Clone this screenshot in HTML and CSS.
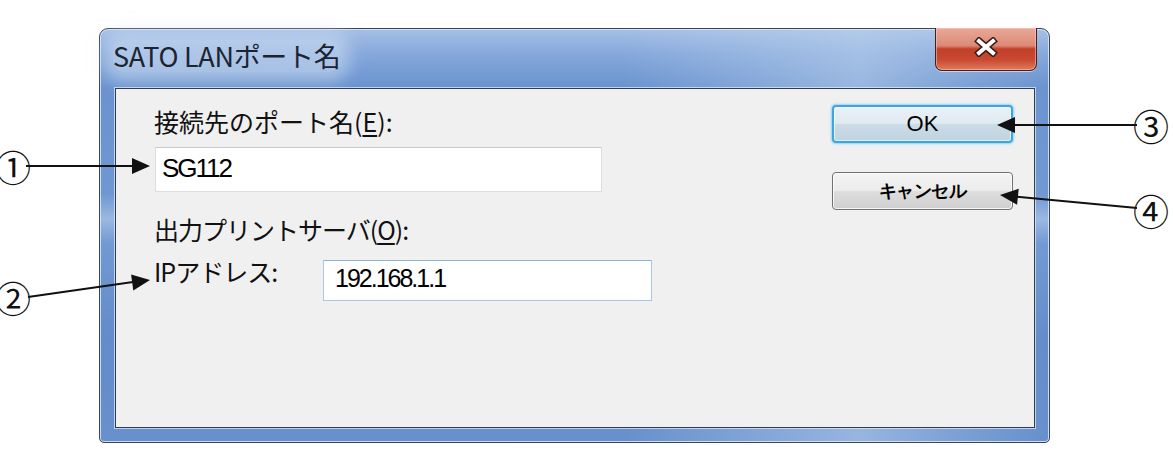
FILE: index.html
```html
<!DOCTYPE html>
<html lang="ja">
<head>
    <meta charset="UTF-8">
    <title>SATO LANポート名</title>
    <link rel="stylesheet" href="styles.css">
</head>
<body>
    <div class="page">
        <!-- Dialog window -->
        <div class="window">
            <div class="titlebar">
                <span class="title">SATO LANポート名</span>
                <button class="close" type="button">
                    <svg width="26" height="20" viewBox="0 0 26 20">
                        <path d="M6 4 L20 16 M20 4 L6 16" stroke="#3a1d18" stroke-width="7" stroke-linecap="square"/>
                        <path d="M6 4 L20 16 M20 4 L6 16" stroke="#ffffff" stroke-width="4" stroke-linecap="square"/>
                    </svg>
                </button>
            </div>
            <div class="client">
                <div class="fields">
                    <label class="label">接続先のポート名(<u>E</u>):</label>
                    <div class="textbox port-box">SG112</div>
                    <div class="label group">出力プリントサーバ(<u>O</u>):</div>
                    <div class="ip-row">
                        <label class="label ip-label">IPアドレス:</label>
                        <div class="textbox ip-box">192.168.1.1</div>
                    </div>
                </div>
                <div class="buttons">
                    <button class="btn btn-default" type="button">OK</button>
                    <button class="btn btn-cancel" type="button">キャンセル</button>
                </div>
            </div>
        </div>

        <!-- Numbered callouts drawn over the dialog -->
        <svg class="callouts" width="1173" height="456" viewBox="0 0 1173 456">
            <g stroke="#111" stroke-width="2">
                <line x1="26" y1="166" x2="134" y2="166"/>
                <line x1="28" y1="297" x2="133" y2="282"/>
                <line x1="1137" y1="125" x2="1013" y2="125"/>
                <line x1="1137" y1="208" x2="1017" y2="196.7"/>
            </g>
            <g fill="#111">
                <polygon points="150,166 132,158 132,174"/>
                <polygon points="150,280 133.3,290.4 131.1,274.5"/>
                <polygon points="997,125 1015,117 1015,133"/>
                <polygon points="1000,195 1018.7,188.7 1017.1,204.7"/>
            </g>
            <g class="num">
                <text x="13" y="166">①</text>
                <text x="13" y="297">②</text>
                <text x="1151" y="125">③</text>
                <text x="1151" y="210">④</text>
            </g>
        </svg>
    </div>
</body>
</html>
```

FILE: styles.css
```css
body {
    margin: 0;
    background: #fff;
    font-family: "Noto Sans CJK JP", "Noto Sans", sans-serif;
}
.page {
    position: relative;
    width: 1173px;
    height: 456px;
    padding: 28px 0 0 99px;
    box-sizing: border-box;
    overflow: hidden;
}

/* Aero style frame */
.window {
    width: 951px;
    height: 415px;
    box-sizing: border-box;
    padding: 0 14px 14px 15px;
    display: flex;
    flex-direction: column;
    border: 1px solid #3a4656;
    border-radius: 9px 9px 5px 5px;
    background:
        linear-gradient(90deg, rgba(255,255,255,0) 0, rgba(255,255,255,0) 55%, rgba(190,212,238,0.55) 80%, rgba(190,212,238,0.2) 92%, rgba(255,255,255,0) 100%),
        linear-gradient(180deg, #a6c0e6 0, #86a8db 6%, #6a93cf 14%, #6f98d2 40%, #9bb8e2 46%, #7199d2 52%, #628cca 75%, #6790cc 100%);
    box-shadow: inset 0 0 0 1px rgba(226, 236, 250, 0.8);
}
.titlebar {
    height: 59px;
    display: flex;
    justify-content: space-between;
    align-items: flex-start;
}
.title {
    margin: 11px 0 0 -2px;
    font-size: 27px;
    line-height: 32px;
    color: #1c2430;
    letter-spacing: -0.3px;
    background: rgba(206, 222, 242, 0.55);
    box-shadow: 0 0 16px 10px rgba(206, 222, 242, 0.55);
    border-radius: 10px;
}
.close {
    width: 102px;
    height: 43px;
    margin: -1px -2px 0 0;
    padding: 0;
    display: flex;
    align-items: center;
    justify-content: center;
    border: 1px solid #4a1e17;
    border-top: none;
    border-radius: 0 0 7px 7px;
    background: linear-gradient(180deg, #e9a898 0, #dc8a77 42%, #c2402a 50%, #c9482f 75%, #de7b5e 100%);
    box-shadow: inset 0 0 0 1px rgba(255, 210, 200, 0.5), 0 1px 0 rgba(255, 255, 255, 0.5);
}
.close svg {
    margin-top: -4px;
}

.client {
    flex: 1;
    display: flex;
    justify-content: space-between;
    background: #f0f0f0;
    border: 1px solid #2f3d50;
    box-shadow: 0 0 0 1px rgba(230, 238, 248, 0.7);
}
.fields {
    padding: 17px 0 0 38px;
}
.label {
    display: block;
    font-size: 25px;
    line-height: 30px;
    color: #111;
}
.label u {
    text-underline-offset: 3px;
}
.group {
    margin-top: 22px;
    letter-spacing: -1px;
}
.textbox {
    box-sizing: border-box;
    background: #fff;
    font-family: "Liberation Sans", Arial, sans-serif;
    color: #000;
}
.port-box {
    width: 447px;
    height: 45px;
    margin: 11px 0 0 1px;
    padding-left: 6px;
    border: 1px solid #dcdde0;
    border-top-color: #c9cbd0;
    font-size: 26px;
    line-height: 40px;
    letter-spacing: -2px;
}
.ip-row {
    display: flex;
    align-items: flex-start;
    margin-top: 16px;
}
.ip-label {
    width: 169px;
    margin-top: -4px;
    letter-spacing: -1px;
}
.ip-box {
    width: 329px;
    height: 41px;
    padding-left: 11px;
    border: 1px solid #a9c6e4;
    border-top-color: #8fb2d8;
    font-size: 25px;
    line-height: 34px;
    letter-spacing: -2px;
}

.buttons {
    display: flex;
    flex-direction: column;
    gap: 29px;
    padding: 16px 21px 0 0;
}
.btn {
    width: 181px;
    height: 38px;
    padding: 0;
    border: 1px solid #707070;
    border-radius: 4px;
    background: linear-gradient(180deg, #f4f4f4 0, #ececec 48%, #dddddd 52%, #cfcfcf 100%);
    box-shadow: inset 0 0 0 1px rgba(255, 255, 255, 0.8);
    color: #000;
}
.btn-default {
    border: 2px solid #3ca6df;
    background: linear-gradient(180deg, #e9f1f6 0, #dfeaf1 48%, #cbdce7 52%, #bfd3e1 100%);
    box-shadow: 0 0 2px 1px rgba(80, 190, 240, 0.6), inset 0 0 0 1px rgba(255, 255, 255, 0.6);
    font-family: "Liberation Sans", Arial, sans-serif;
    font-size: 22px;
    font-weight: normal;
}
.btn-cancel {
    font-size: 18px;
    font-weight: bold;
    letter-spacing: -0.5px;
}

.callouts {
    position: absolute;
    left: 0;
    top: 0;
    pointer-events: none;
}
.num text {
    font-family: "Noto Sans CJK JP", sans-serif;
    font-size: 36px;
    fill: #111;
    text-anchor: middle;
    dominant-baseline: central;
}
```
